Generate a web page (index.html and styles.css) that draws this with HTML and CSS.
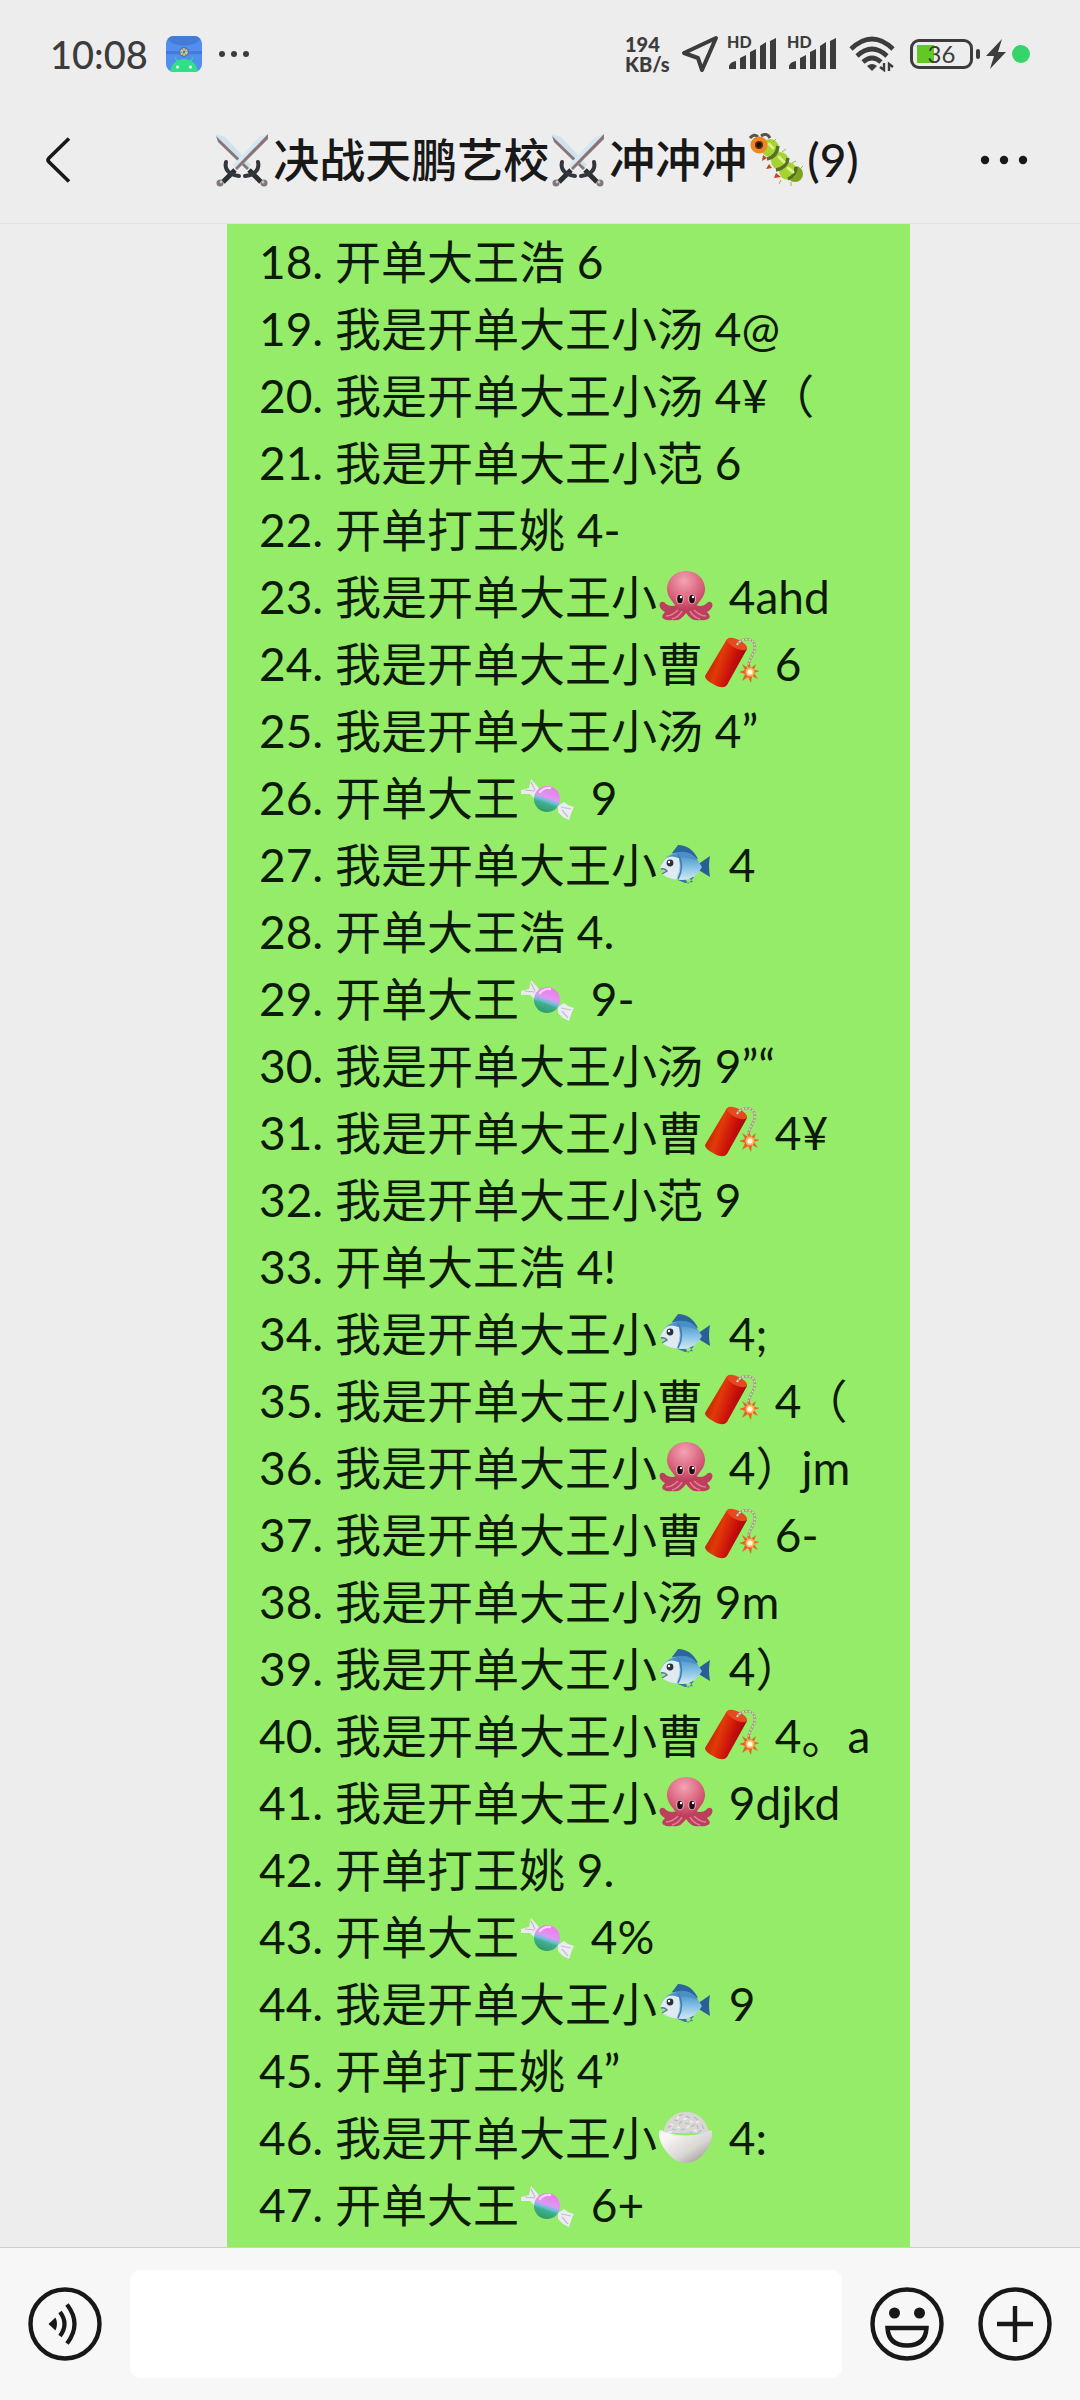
FILE: index.html
```html
<!DOCTYPE html>
<html lang="zh-CN">
  <head>
    <meta charset="UTF-8" />
    <meta name="viewport" content="width=device-width, initial-scale=1.0" />
    <title>决战天鹏艺校</title>
    <link rel="stylesheet" href="styles.css" />
  </head>
  <body>
    <svg class="defs" aria-hidden="true">
      <defs>
        <radialGradient id="gOcto" cx="0.45" cy="0.25" r="0.8">
          <stop offset="0" stop-color="#f3a3b3" />
          <stop offset="0.5" stop-color="#dd6b84" />
          <stop offset="1" stop-color="#b93455" />
        </radialGradient>
        <linearGradient id="gFire" x1="0" y1="0.3" x2="1" y2="0.7">
          <stop offset="0" stop-color="#a81505" />
          <stop offset="0.35" stop-color="#e23a08" />
          <stop offset="0.65" stop-color="#c80f0c" />
          <stop offset="1" stop-color="#7d0508" />
        </linearGradient>
        <linearGradient id="gCandy" x1="0.7" y1="0" x2="0.35" y2="1">
          <stop offset="0.1" stop-color="#f27af0" />
          <stop offset="0.46" stop-color="#d99af0" />
          <stop offset="0.58" stop-color="#68bfd8" />
          <stop offset="0.68" stop-color="#3fae8c" />
          <stop offset="1" stop-color="#2f9a68" />
        </linearGradient>
        <linearGradient id="gFish" x1="0" y1="0" x2="0" y2="1">
          <stop offset="0" stop-color="#3f86bd" />
          <stop offset="0.5" stop-color="#7dbde3" />
          <stop offset="1" stop-color="#d5e7f2" />
        </linearGradient>
        <linearGradient id="gBowl" x1="0" y1="0" x2="1" y2="1">
          <stop offset="0.2" stop-color="#f7f6f5" />
          <stop offset="0.6" stop-color="#d8d5d2" />
          <stop offset="1" stop-color="#8d8984" />
        </linearGradient>
      </defs>

      <symbol id="swords" viewBox="0 0 54 54">
        <g>
          <path d="M1 1l9 3 26 28-4 5L3 8z" fill="#cfe3ef" />
          <path d="M1 3l2 6 29 28 2-2z" fill="#8b7474" />
          <path d="M34 37l12 12" stroke="#2b2e33" stroke-width="5" />
          <path d="M43 29c2 8-4 13-13 14" fill="none" stroke="#33373c" stroke-width="4" stroke-linecap="round" />
          <circle cx="49" cy="50" r="3.5" fill="#80777c" />
          <circle cx="48" cy="49" r="1.4" fill="#c9c4c8" />
        </g>
        <g transform="matrix(-1 0 0 1 54 0)">
          <path d="M1 1l9 3 26 28-4 5L3 8z" fill="#d4e8f3" />
          <path d="M1 1v5l31 31 2-2z" fill="#8b7474" />
          <path d="M34 37l12 12" stroke="#2b2e33" stroke-width="5" />
          <path d="M43 29c2 8-4 13-13 14" fill="none" stroke="#33373c" stroke-width="4" stroke-linecap="round" />
          <circle cx="49" cy="50" r="3.5" fill="#80777c" />
          <circle cx="48" cy="49" r="1.4" fill="#c9c4c8" />
        </g>
      </symbol>

      <symbol id="caterpillar" viewBox="0 0 54 54">
        <path d="M14 22l-1 6 5-3zM20 31l-3 5 6-1zM27 40l-2 5 7-1z" fill="#c8421c" />
        <circle cx="46" cy="41" r="8" fill="#7da51c" />
        <circle cx="39" cy="38" r="9" fill="#a5d431" />
        <circle cx="31" cy="28" r="9" fill="#a5d431" />
        <circle cx="21" cy="15" r="9" fill="#a5d431" />
        <path d="M18 26Q28 24 29 13M27 37Q38 35 39 25M39 46Q47 43 47 34" fill="none" stroke="#5c6c2a" stroke-width="3.4" />
        <path d="M24 9l3-3M33 19l4-3M43 30l4-2M51 36l3-3M32 47l-2 4M42 49v4" stroke="#8fbb35" stroke-width="1" />
        <path d="M30 24l5 5M39 35l5 4M20 11l4 4" stroke="#dcf08a" stroke-width="3" stroke-linecap="round" />
        <path d="M1 5q4-5 8-1M12 3q6-4 9 2" fill="none" stroke="#58534d" stroke-width="3" />
        <circle cx="10" cy="12" r="8.5" fill="#ef8523" />
        <circle cx="10" cy="12" r="4" fill="#5d2a0a" />
        <circle cx="10" cy="12" r="2.4" fill="#1a1410" />
      </symbol>

      <symbol id="octopus" viewBox="0 0 54 54">
        <path d="M1 33q3-3 6 1 5 4 14 0l13 0q8 4 13 0 3-4 6-1 2 5-5 9 5 5 1 7-4 2-8 1-8 2-14-7-6 9-14 7-5 1-8-1-4-2 1-7-7-4-5-9z" fill="#bd3f5e" />
        <path d="M7 46q6 0 12-6M47 46q-6 0-12-6M13 49q7-2 10-8M41 49q-7-2-10-8" fill="none" stroke="#e37f96" stroke-width="1.6" />
        <path d="M27 1c12 0 19 9 19 18 0 8-6 12-9 18-3 5-17 5-20 0-3-6-9-10-9-18C8 10 15 1 27 1z" fill="url(#gOcto)" />
        <ellipse cx="21" cy="29" rx="4.2" ry="5.2" fill="#e995a6" />
        <ellipse cx="33" cy="29" rx="4.2" ry="5.2" fill="#e995a6" />
        <ellipse cx="21" cy="29" rx="2.8" ry="4.2" fill="#1d1012" />
        <ellipse cx="33" cy="29" rx="2.8" ry="4.2" fill="#1d1012" />
        <circle cx="22" cy="27" r="1.2" fill="#fff" />
        <circle cx="34" cy="27" r="1.2" fill="#fff" />
      </symbol>

      <symbol id="firecracker" viewBox="0 0 54 54">
        <path d="M22 2Q33 1 42 12L22 48Q18 53 8 47 0 43 0 39z" fill="url(#gFire)" />
        <ellipse cx="32" cy="7" rx="11" ry="4.5" transform="rotate(26 32 7)" fill="#e8481f" />
        <path d="M32 8C36 0 50 0 50 10c0 8-6 9-7 20" fill="none" stroke="#9d9b79" stroke-width="2.6" />
        <path d="M32 8C36 0 50 0 50 10c0 8-6 9-7 20" fill="none" stroke="#dad8c0" stroke-width="1.6" stroke-dasharray="2 1.5" />
        <path d="M44 25l2 6 5-4-2 6 6 1-6 2 4 6-6-3-1 7-3-6-6 4 3-7-6-2 6-2-3-6 6 4z" fill="#e9622a" />
        <circle cx="45" cy="35" r="4.5" fill="#ffb55e" />
        <circle cx="45" cy="35" r="2.6" fill="#fffbe6" />
      </symbol>

      <symbol id="candy" viewBox="0 0 54 54">
        <path d="M0 19l8-2 2-9 7 8 2 5-6 6-4-4-9 0z" fill="#eceaf0" />
        <path d="M4 19l10 1M10 11l4 8" stroke="#bdbac8" stroke-width="1.2" />
        <path d="M37 35l6-4 4 3 6 2-2 4-3 9-6-3-5-5z" fill="#eceaf2" />
        <path d="M40 36l10 2M41 39l6 7" stroke="#c2c0d0" stroke-width="1.2" />
        <circle cx="26" cy="28" r="13" fill="url(#gCandy)" />
        <path d="M19 21q4-5 10-4" fill="none" stroke="#fbd3fb" stroke-width="2.4" stroke-linecap="round" />
      </symbol>

      <symbol id="fish" viewBox="0 0 54 54">
        <path d="M13 15L19 7q13 0 20 14z" fill="#2c669b" />
        <path d="M25 38l4 8 6-7zM14 40l16 0 4 4-8 1z" fill="#3b75a5" />
        <path d="M38 27l13-9q-1 5-1 10 0 5 1 11l-13-8z" fill="#2a5f95" />
        <path d="M1 30C5 17 16 13 25 14c9 1 14 8 18 15-4 7-10 13-20 13-9 0-16-3-20-6l4-2z" fill="url(#gFish)" />
        <path d="M1 30C5 20 11 16 18 15q6 12-1 26-9-1-14-5l5-3z" fill="#dfeaf1" />
        <path d="M7 20Q14 14 26 14q8 1 13 9-12-5-20-3-6-3-12 0z" fill="#4a90c6" />
        <path d="M19 16q7 12 0 25" fill="none" stroke="#3f80b3" stroke-width="1.6" />
        <path d="M2 31q4-1 6 2l-5 3" fill="none" stroke="#55788f" stroke-width="1.4" />
        <circle cx="11" cy="25" r="3.4" fill="#27323c" />
        <circle cx="10" cy="24" r="1.2" fill="#fff" />
      </symbol>

      <symbol id="rice" viewBox="0 0 54 54">
        <path d="M4 22C7 8 15 1 27 1s20 7 23 21z" fill="#d9d7d5" />
        <path d="M9 17l3-3M15 9l4 1M20 5l4-2M27 5l4 2M35 6l4 3M43 14l2 4M13 18l4 1M20 13l3-3M26 12l4 1M32 16l4-3M38 14l1 4M22 19l4-1M30 21l4 1M39 21l4-2" stroke="#bcb9b6" stroke-width="1.2" />
        <path d="M11 13l3 1M18 8l2-3M24 8l4 0M31 10l3 1M37 11l3 0M18 16l3 1M28 17l2-2M35 19l3 1M9 21l4 0" stroke="#f0f0ef" stroke-width="1.4" />
        <path d="M0 20q3-2 5 1 22 7 43 0 3-3 5-1 1 10-6 20Q39 52 27 52T7 40Q-1 30 0 20z" fill="url(#gBowl)" />
      </symbol>
    </svg>

    <div class="status">
      <div class="status-side">
        <span class="clock">10:08</span>
        <svg class="app" viewBox="0 0 36 36">
          <clipPath id="appClip"><rect width="36" height="36" rx="8" /></clipPath>
          <g clip-path="url(#appClip)">
            <rect width="36" height="36" fill="#518ef0" />
            <ellipse cx="18" cy="0" rx="17" ry="9.5" fill="#437bd6" />
            <path d="M0 15h36v3H0z" fill="#437bd6" />
            <circle cx="18" cy="16" r="5" fill="#4577be" />
            <circle cx="18" cy="16" r="2.5" fill="none" stroke="#ecc96a" stroke-width="2.6" stroke-dasharray="2 .6" />
            <path d="M11 25l-2-4M25 25l2-4" stroke="#31df86" stroke-width="1.2" />
            <path d="M4 36c1-8 7-13 14-13s13 5 14 13z" fill="#31df86" />
            <circle cx="11.5" cy="31" r="1.5" fill="#fff" />
            <circle cx="24.5" cy="31" r="1.5" fill="#fff" />
          </g>
        </svg>
        <svg class="more" viewBox="0 0 32 8" fill="#3c3c3c">
          <circle cx="4" cy="4" r="3" />
          <circle cx="16" cy="4" r="3" />
          <circle cx="28" cy="4" r="3" />
        </svg>
      </div>
      <div class="status-side">
        <div class="speed"><span>194</span><span>KB/s</span></div>
        <svg class="arrow" viewBox="0 0 38 38">
          <path d="M35 3L3 18l14 5 4 12z" fill="none" stroke="#3c3c3c" stroke-width="4" stroke-linejoin="round" />
        </svg>
        <div class="signal">
          <span>HD</span>
          <svg viewBox="0 0 50 32" fill="#3c3c3c">
            <path d="M2 31v-3q1-4 7-5v8zM13 31V20l6-3v14zM23 31V14l6-3v20zM33 31V8l6-4v27zM43 31V3l6-3v31z" />
          </svg>
        </div>
        <div class="signal">
          <span>HD</span>
          <svg viewBox="0 0 50 32" fill="#3c3c3c">
            <path d="M2 31v-3q1-4 7-5v8zM13 31V20l6-3v14zM23 31V14l6-3v20zM33 31V8l6-4v27zM43 31V3l6-3v31z" />
          </svg>
        </div>
        <svg class="wifi" viewBox="0 0 46 36">
          <path d="M2 13q21-20 42 0M8 20q15-14 30 0M14 26q9-8 18 0" fill="none" stroke="#3c3c3c" stroke-width="4.6" />
          <path d="M18 30q5-4 10 0l-5 5z" fill="#3c3c3c" />
          <path d="M31 31l4 3V27M40 35V28l4 3" fill="none" stroke="#3c3c3c" stroke-width="2.4" />
        </svg>
        <div class="battery"><span>36</span></div>
        <svg class="bolt" viewBox="0 0 20 30"><path d="M16 0L0 17h8L4 30 20 13h-8z" fill="#3c3c3c" /></svg>
        <i class="dot"></i>
      </div>
    </div>

    <header class="header">
      <button class="back" aria-label="返回">
        <svg viewBox="0 0 26 46"><path d="M23 1.5L3 21q-2 2 0 4l20 19.5" fill="none" stroke="#181818" stroke-width="3.6" /></svg>
      </button>
      <h1 class="title"><svg class="emoji"><use href="#swords" /></svg>决战天鹏艺校<svg class="emoji"><use href="#swords" /></svg>冲冲冲<svg class="emoji"><use href="#caterpillar" /></svg>(9)</h1>
      <button class="menu" aria-label="更多">
        <svg viewBox="0 0 48 10" fill="#181818">
          <circle cx="5" cy="5" r="4.2" />
          <circle cx="24" cy="5" r="4.2" />
          <circle cx="43" cy="5" r="4.2" />
        </svg>
      </button>
    </header>

    <main class="chat">
      <ul class="bubble">
        <li>18. 开单大王浩 6</li>
        <li>19. 我是开单大王小汤 4@</li>
        <li>20. 我是开单大王小汤 4¥（</li>
        <li>21. 我是开单大王小范 6</li>
        <li>22. 开单打王姚 4-</li>
        <li>23. 我是开单大王小<svg class="emoji"><use href="#octopus" /></svg> 4ahd</li>
        <li>24. 我是开单大王小曹<svg class="emoji"><use href="#firecracker" /></svg> 6</li>
        <li>25. 我是开单大王小汤 4”</li>
        <li>26. 开单大王<svg class="emoji"><use href="#candy" /></svg> 9</li>
        <li>27. 我是开单大王小<svg class="emoji"><use href="#fish" /></svg> 4</li>
        <li>28. 开单大王浩 4.</li>
        <li>29. 开单大王<svg class="emoji"><use href="#candy" /></svg> 9-</li>
        <li>30. 我是开单大王小汤 9”“</li>
        <li>31. 我是开单大王小曹<svg class="emoji"><use href="#firecracker" /></svg> 4¥</li>
        <li>32. 我是开单大王小范 9</li>
        <li>33. 开单大王浩 4!</li>
        <li>34. 我是开单大王小<svg class="emoji"><use href="#fish" /></svg> 4;</li>
        <li>35. 我是开单大王小曹<svg class="emoji"><use href="#firecracker" /></svg> 4（</li>
        <li>36. 我是开单大王小<svg class="emoji"><use href="#octopus" /></svg> 4）jm</li>
        <li>37. 我是开单大王小曹<svg class="emoji"><use href="#firecracker" /></svg> 6-</li>
        <li>38. 我是开单大王小汤 9m</li>
        <li>39. 我是开单大王小<svg class="emoji"><use href="#fish" /></svg> 4）</li>
        <li>40. 我是开单大王小曹<svg class="emoji"><use href="#firecracker" /></svg> 4。a</li>
        <li>41. 我是开单大王小<svg class="emoji"><use href="#octopus" /></svg> 9djkd</li>
        <li>42. 开单打王姚 9.</li>
        <li>43. 开单大王<svg class="emoji"><use href="#candy" /></svg> 4%</li>
        <li>44. 我是开单大王小<svg class="emoji"><use href="#fish" /></svg> 9</li>
        <li>45. 开单打王姚 4”</li>
        <li>46. 我是开单大王小<svg class="emoji"><use href="#rice" /></svg> 4:</li>
        <li>47. 开单大王<svg class="emoji"><use href="#candy" /></svg> 6+</li>
      </ul>
    </main>

    <footer class="bar">
      <button aria-label="语音">
        <svg viewBox="0 0 74 74" fill="none" stroke="#181818" stroke-width="4.4">
          <circle cx="37" cy="37" r="34.5" />
          <path d="M20.500 37l7-6.500q3 6.500 0 13z" fill="#181818" stroke="none" />
          <path d="M32 25q9 12 0 24M39 17.500q15 19.500 0 39" stroke-width="4.2" />
        </svg>
      </button>
      <input type="text" aria-label="消息" />
      <div class="tools">
        <button aria-label="表情">
          <svg viewBox="0 0 74 74" fill="none" stroke="#181818" stroke-width="4.4">
            <circle cx="37" cy="37" r="34.5" />
            <circle cx="24.5" cy="26" r="5.5" fill="#181818" stroke="none" />
            <circle cx="49.5" cy="26" r="5.5" fill="#181818" stroke="none" />
            <path d="M17.500 41h39q-1 17.500-19.500 17.500T17.500 41z" />
          </svg>
        </button>
        <button aria-label="更多功能">
          <svg viewBox="0 0 74 74" fill="none" stroke="#181818" stroke-width="4.4">
            <circle cx="37" cy="37" r="34.5" />
            <path d="M37 19v36M19 37h36" />
          </svg>
        </button>
      </div>
    </footer>
  </body>
</html>
```

FILE: styles.css
```css
* {
  margin: 0;
  padding: 0;
  box-sizing: border-box;
}
body {
  display: flex;
  flex-direction: column;
  min-height: 100vh;
  background: #ededed;
  color: #181818;
  font-family: Lato, "Noto Sans CJK SC", sans-serif;
}
ul {
  list-style: none;
}
button {
  border: 0;
  background: none;
  cursor: pointer;
}
svg {
  display: block;
  flex-shrink: 0;
}
.defs {
  position: absolute;
  width: 0;
  height: 0;
}
.emoji {
  display: inline-block;
  width: 54px;
  height: 54px;
  margin: 0 4px 0 2px;
  vertical-align: -10px;
}

/* status bar */
.status {
  display: flex;
  justify-content: space-between;
  align-items: center;
  height: 108px;
  padding: 0 50px;
  color: #3c3c3c;
}
.status-side {
  display: flex;
  align-items: center;
}
.clock {
  font-size: 38px;
  font-weight: 500;
}
.app {
  width: 36px;
  height: 36px;
  margin: 0 16px 0 18px;
}
.more {
  width: 32px;
  height: 8px;
}
.speed {
  display: flex;
  flex-direction: column;
  width: 56px;
  font-size: 20px;
  font-weight: 900;
  line-height: 20px;
}
.arrow {
  width: 38px;
  height: 38px;
  margin-right: 8px;
}
.signal {
  position: relative;
  width: 50px;
  margin-right: 10px;
}
.signal span {
  position: absolute;
  left: 0;
  top: -4px;
  font-size: 16px;
  font-weight: 900;
  line-height: 16px;
}
.signal svg {
  width: 50px;
  height: 32px;
}
.wifi {
  width: 46px;
  height: 36px;
  margin: 0 15px 0 2px;
}
.battery {
  position: relative;
  width: 63px;
  height: 30px;
  margin-right: 13px;
  border: 3px solid #3c3c3c;
  border-radius: 9px;
  background: linear-gradient(#62c924, #62c924) 4px 3px / 17px 18px no-repeat;
  font-size: 24px;
  line-height: 24px;
  text-align: center;
}
.battery::after {
  content: "";
  position: absolute;
  right: -10px;
  top: 7px;
  width: 4px;
  height: 10px;
  border-radius: 2px;
  background: #3c3c3c;
}
.bolt {
  width: 20px;
  height: 30px;
  margin-right: 6px;
}
.dot {
  width: 18px;
  height: 18px;
  border-radius: 50%;
  background: #37d46c;
}

/* title */
.header {
  display: flex;
  align-items: center;
  justify-content: space-between;
  height: 116px;
  padding: 0 52px 12px 46px;
  border-bottom: 1px solid #e2e2e2;
}
.back svg {
  width: 26px;
  height: 46px;
}
.menu svg {
  width: 48px;
  height: 10px;
}
.title {
  padding-left: 20px;
  font-size: 46px;
  font-weight: 500;
  line-height: 60px;
}

/* messages */
.chat {
  flex: 1;
  overflow: hidden;
}
.bubble {
  margin: 0 170px 0 227px;
  padding: 4px 32px 9px;
  background: #95ec69;
  color: #0d1a06;
  font-size: 46px;
  line-height: 67px;
  white-space: nowrap;
}

/* input bar */
.bar {
  display: flex;
  align-items: center;
  gap: 28px;
  height: 153px;
  padding: 0 28px;
  border-top: 1px solid #cfcfcf;
  background: #f7f7f7;
}
.bar svg {
  width: 74px;
  height: 74px;
}
.bar input {
  flex: 1;
  min-width: 0;
  height: 108px;
  padding: 0 24px;
  border: 0;
  border-radius: 10px;
  background: #fff;
  font: inherit;
  font-size: 46px;
}
.tools {
  display: flex;
  gap: 34px;
}
```
